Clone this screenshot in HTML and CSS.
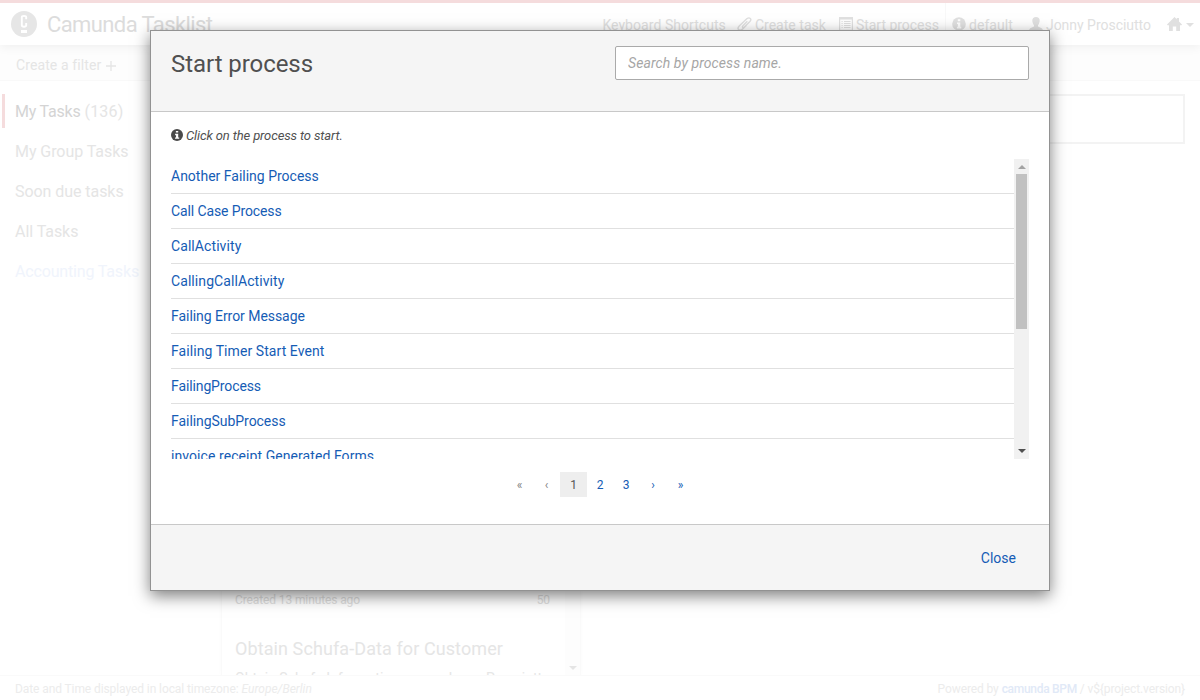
FILE: index.html
```html
<!DOCTYPE html>
<html lang="en">
<head>
<meta charset="utf-8">
<title>Camunda Tasklist</title>
<link rel="stylesheet" href="styles.css">
</head>
<body>
<div class="app">
  <header class="topbar">
    <svg class="logo" viewBox="0 0 26 26"><circle cx="13" cy="13" r="13" fill="#e6e6e6"/><path d="M15.2 8.3V6.2Q15.2 4.9 13 4.9T10.8 6.2V14.3Q10.8 15.7 13 15.7T15.2 14.3V12" fill="none" stroke="#fff" stroke-width="1.9"/><path d="M10 19h6v3h-6z" fill="#fff"/></svg>
    <h1 class="brand">Camunda Tasklist</h1>
    <nav class="nav">
      <span class="keys">Keyboard Shortcuts</span>
      <span class="item create"><svg class="icon clip" viewBox="0 0 15 14"><path d="M10.300 4.300 6 8.600Q5 9.800 5.700 10.400T7.400 9.900L12.900 4.500Q14.600 2.600 13.300 1.400T10 1.600L2.200 9Q.2 11 1.500 12.500T5.200 12.400L9.500 8.200" fill="none" stroke="currentColor" stroke-width="1.400"/></svg><span>Create task</span></span>
      <span class="item start"><svg class="icon" viewBox="0 0 14 14"><path d="M0 0h14v14H0zM1.2 2.4v10.4h11.6V2.4z" fill="currentColor" fill-rule="evenodd"/><path d="M2.5 4.5h1.2M5 4.5h6.6M2.500 6.500h1.200M5 6.500h6.600M2.500 8.500h1.200M5 8.500h6.600M2.500 10.500h1.200M5 10.500h6.600" stroke="currentColor" stroke-width="1"/></svg><span>Start process</span></span>
      <span class="item engine"><svg class="icon" viewBox="0 0 14 14"><circle cx="7" cy="7" r="6.8" fill="currentColor"/><path d="M5.8 2.3h2.5v2H5.8zM5 5.5h3.3v4.3h1v1.6H4.9V9.8h1V7H5z" fill="#fff"/></svg><span>default</span></span>
      <span class="item user"><svg class="icon" viewBox="0 0 14 14"><path d="M7 0c2.3 0 3.9 1.500 3.700 4C10.500 6 9.700 7.200 9 8.200V9.500L12.700 11.200Q13.900 11.900 14 14H0Q.1 11.900 1.300 11.200L5 9.500V8.200C4.300 7.200 3.500 6 3.300 4 3.100 1.500 4.700 0 7 0z" fill="currentColor"/></svg><span>Jonny Prosciutto</span></span>
      <span class="item home"><svg class="icon" viewBox="0 0 15 14"><path d="M7.500 0 9.800 2.300V.9h2.200v3.600L15 7.500l-.5.7H13V14H9.200V9.500H5.800V14H2V8.200H.5L0 7.500z" fill="currentColor"/></svg><i class="caret"></i></span>
    </nav>
  </header>
  <div class="filterbar"><span>Create a filter</span><svg class="plus" viewBox="0 0 10 10"><path d="M5 0v10M0 5h10" stroke="currentColor" stroke-width="1.300"/></svg></div>
  <main class="columns">
    <ul class="filters">
      <li class="active"><b>My Tasks</b> <span>(136)</span></li>
      <li>My Group Tasks</li>
      <li>Soon due tasks</li>
      <li>All Tasks</li>
      <li class="link">Accounting Tasks</li>
    </ul>
    <section class="tasks">
      <div class="cards">
        <div class="meta"><span>Created 13 minutes ago</span><span>50</span></div>
        <h2>Obtain Schufa-Data for Customer</h2>
        <div class="meta process"><span>Obtain Schufa Information</span><span>Jonny Prosciutto</span></div>
      </div>
      <div class="track"><i class="arrow-down"></i></div>
    </section>
    <section class="detail"><div class="searchbox"></div></section>
  </main>
  <footer class="footer">
    <span><span class="zone">Date and Time displayed in local timezone:</span> <em>Europe/Berlin</em></span>
    <span><span class="powered">Powered by</span> <b>camunda BPM</b> <span class="version">/ v${project.version}</span></span>
  </footer>
</div>

<div class="modal">
  <div class="modal-header">
    <h3>Start process</h3>
    <input class="search" type="text" placeholder="Search by process name.">
  </div>
  <div class="modal-body">
    <p class="hint"><svg viewBox="0 0 14 14"><circle cx="7" cy="7" r="7" fill="#4a4a4a"/><path d="M5.700 2.200h2.700v2H5.700zM4.800 5.500h3.600v4.300h1.200v1.700H4.700V9.800h1.200V7.200H4.800z" fill="#fff"/></svg><em>Click on the process to start.</em></p>
    <div class="scroller">
      <ul class="processes">
        <li>Another Failing Process</li>
        <li class="snug">Call Case Process</li>
        <li class="wide">CallActivity</li>
        <li class="wide">CallingCallActivity</li>
        <li class="trim">Failing Error Message</li>
        <li class="loose">Failing Timer Start Event</li>
        <li class="snug">FailingProcess</li>
        <li class="trim">FailingSubProcess</li>
        <li class="loose">invoice receipt Generated Forms</li>
      </ul>
      <div class="scrollbar"><i class="arrow-up"></i><i class="thumb"></i><i class="arrow-down"></i></div>
    </div>
    <div class="pages"><span class="off">«</span><span class="off">‹</span><span class="current">1</span><span class="num">2</span><span class="num">3</span><span class="next">›</span><span>»</span></div>
  </div>
  <div class="modal-footer"><a>Close</a></div>
</div>
</body>
</html>
```
FILE: styles.css
```css
* { box-sizing: border-box; }
html, body { margin: 0; height: 100%; overflow: hidden; }
body { font: 14px/20px Roboto, "Liberation Sans", sans-serif; color: #505050; background: #fff; }
h1, h2, h3, p, ul { margin: 0; padding: 0; font-weight: 400; }
ul { list-style: none; }
b { font-weight: 500; }
svg { display: block; flex: none; }

/* dimmed application */
.app { height: 700px; display: flex; flex-direction: column; color: #e5e5e5; }
.topbar { height: 45px; flex: none; border-top: 3px solid #f5dcdd; display: flex; align-items: center; padding: 0 6px 0 11px; box-shadow: 0 2px 10px rgba(0,0,0,.06); z-index: 1; }
.logo { width: 26px; height: 26px; }
.brand { margin: 2px 0 0 10px; font-size: 22px; letter-spacing: -.6px; line-height: 26px; color: #dcdcdc; }
.nav { margin-left: auto; align-self: stretch; display: flex; align-items: center; color: #e0e0e0; }
.nav span span, .keys { position: relative; top: 1px; }
.item { display: flex; align-items: center; }
.icon { width: 14px; height: 14px; margin-right: 3px; }
.clip { width: 15px; }
.keys { letter-spacing: .053px; margin-right: 11px; }
.create { margin-right: 13px; letter-spacing: .021px; }
.start { align-self: stretch; padding-right: 6px; border-right: 1px solid #f8f8f8; letter-spacing: -.02px; }
.engine { margin-left: 6px; margin-right: 16px; letter-spacing: .07px; }
.user { letter-spacing: -.02px; margin-right: 16px; }
.home .icon { width: 15px; margin-right: 4px; }
.caret { border: 4px solid transparent; border-top-color: currentColor; border-bottom: 0; margin-top: 2px; }
.filterbar { height: 36px; flex: none; display: flex; align-items: center; padding: 5px 16px 0; background: #fdfdfd; border-bottom: 1px solid #f9f9f9; letter-spacing: .1px; }
.plus { width: 10px; height: 10px; margin: 2px 0 0 5px; }
.columns { flex: 1; min-height: 0; display: flex; }
.filters { width: 221px; padding: 13px 0 0 2px; font-size: 16px; }
.filters li { height: 34px; line-height: 36px; margin-bottom: 6px; padding-left: 10px; border-left: 3px solid transparent; letter-spacing: -.06px; }
.filters .active { border-color: #f5dcdd; }
.active b { font-weight: 400; color: #d4d4d4; letter-spacing: -.2px; }
.active span { letter-spacing: .19px; }
.filters .link { color: #f0f4fc; letter-spacing: -.16px; }
.tasks { width: 360px; display: flex; border: solid #fafafa; border-width: 0 1px; box-shadow: 0 0 5px rgba(0,0,0,.02); overflow: hidden; }
.cards { flex: 1; padding: 509px 15px 0 13px; }
.meta { display: flex; justify-content: space-between; font-size: 12px; letter-spacing: -.11px; color: #e0e0e0; }
.cards h2 { margin: 29px 0 9px; font-size: 18px; letter-spacing: .093px; line-height: 20px; white-space: nowrap; }
.process { font-size: 14px; letter-spacing: 0; color: #e6e6e6; }
.track { width: 15px; background: #fdfdfd; display: flex; justify-content: center; align-items: flex-end; padding-bottom: 5px; }
.arrow-down { border: 4px solid transparent; border-top-color: currentColor; border-bottom: 0; }
.detail { flex: 1; padding: 13px 15px; }
.searchbox { height: 50px; border: 2px solid #f3f3f3; }
.footer { height: 25px; flex: none; border-top: 1px solid #fafafa; display: flex; justify-content: space-between; align-items: center; padding: 2px 15px 0; font-size: 12px; color: #ececec; background: #fff; }
.zone { letter-spacing: -.09px; }
.powered, .version { letter-spacing: -.11px; }
.footer b { color: #e1e9f7; letter-spacing: -.3px; }

/* dialog */
.modal { position: absolute; z-index: 2; left: 150px; top: 30px; width: 900px; height: 561px; background: #fff; border: 1px solid #929292; box-shadow: 0 5px 15px rgba(0,0,0,.5); display: flex; flex-direction: column; }
.modal-header { height: 81px; flex: none; background: #f5f5f5; border-bottom: 1px solid #c8c8c8; padding: 15px 20px 0; display: flex; justify-content: space-between; }
.modal-header h3 { font-size: 24px; line-height: 36px; letter-spacing: -.06px; }
.search { width: 414px; height: 34px; border: 1px solid #aaa; border-radius: 2px; background: #fff; padding: 0 12px; font: italic 14px Roboto, sans-serif; letter-spacing: .09px; }
.search::placeholder { color: #a6a6a6; opacity: 1; }
.modal-body { flex: 1; padding: 13px 20px 0; }
.hint { display: flex; align-items: center; height: 20px; font-size: 13px; letter-spacing: -.13px; }
.hint svg { width: 12px; height: 12px; margin-right: 3px; }
.hint em { padding-top: 2px; }
.scroller { height: 300px; margin-top: 14px; display: flex; overflow: hidden; }
.processes { flex: 1; }
.processes li { height: 35px; padding-top: 7px; color: #155cb5; border-bottom: 1px solid #e0e0e0; }
.processes .snug { letter-spacing: -.115px; }
.processes .trim { letter-spacing: -.05px; }
.processes .wide { letter-spacing: .08px; }
.processes .loose { letter-spacing: .07px; }
.scrollbar { width: 15px; flex: none; background: #f1f1f1; display: flex; flex-direction: column; align-items: center; color: #505050; }
.arrow-up { margin: 6px 0 5px; border: 4px solid transparent; border-bottom-color: #a3a3a3; border-top: 0; }
.thumb { width: 11px; height: 155px; background: #c1c1c1; }
.scrollbar .arrow-down { margin: auto 0 6px; }
.pages { display: flex; justify-content: center; margin: 13px 0 0; font-size: 12px; line-height: 24px; color: #155cb5; }
.pages span { width: 27px; height: 25px; padding-top: 1px; text-align: center; }
.pages .off { color: #858585; }
.pages .current { background: #eee; color: #555; }
.pages .num { width: 26px; }
.pages .next { width: 28px; }
.modal-footer { height: 66px; flex: none; background: #f5f5f5; border-top: 1px solid #c8c8c8; display: flex; justify-content: flex-end; align-items: center; padding: 1px 33px 0; color: #155cb5; }
```
